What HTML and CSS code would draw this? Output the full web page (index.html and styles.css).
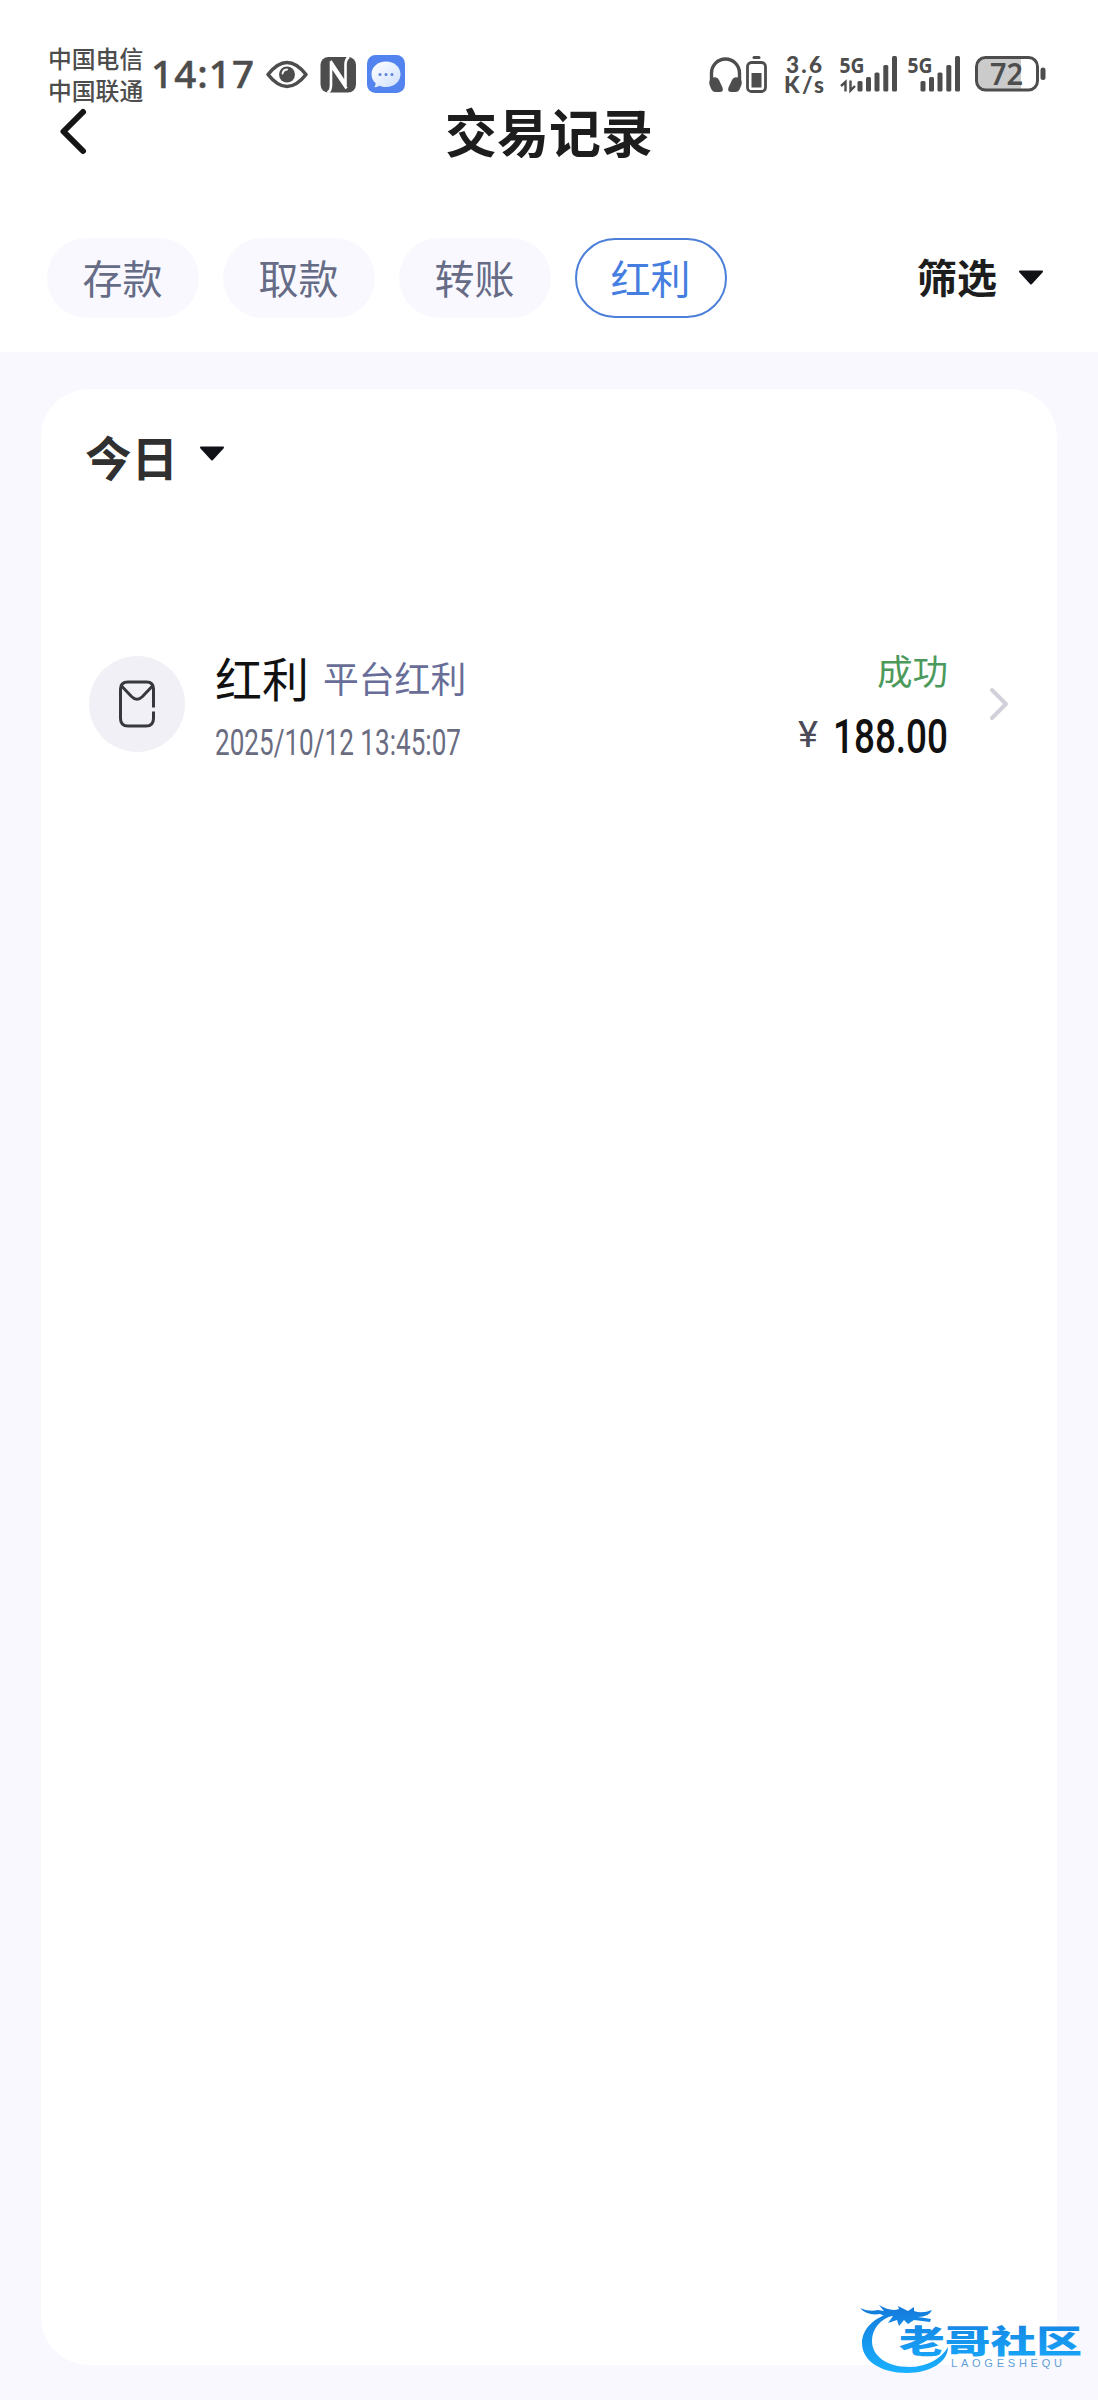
FILE: index.html
```html
<!DOCTYPE html>
<html lang="zh-CN">
<head>
<meta charset="utf-8">
<title>交易记录</title>
<link rel="stylesheet" href="styles.css">
</head>
<body>
<div class="screen">
  <header class="top">
    <div class="status">
      <div class="carriers"><span>中国电信</span><span>中国联通</span></div>
      <svg class="status-left" width="256" height="44" viewBox="150 52 256 44">
        <text class="clock" x="151" y="88" textLength="103">14:17</text>
        <path d="M268 74.500Q287 50.500 306 74.500Q287 98.500 268 74.500Z" fill="none" stroke="#4d4d4d" stroke-width="3.600" stroke-linejoin="round"/>
        <circle cx="287" cy="74.500" r="8" fill="#4d4d4d"/>
        <path d="M282.500 73.500a5 5 0 0 1 4.500-4" fill="none" stroke="#fff" stroke-width="1.800" stroke-linecap="round"/>
        <rect x="320.500" y="57" width="35.500" height="35.500" rx="8" fill="#4d4d4d"/>
        <path d="M327.500 92.500Q331 91 331 85V65.500L346.500 88.500M349 57Q345.500 59 345.500 65V83.500L330.500 61" fill="none" stroke="#fff" stroke-width="2.600"/>
        <defs><linearGradient id="bubble" x2="1" y2="1"><stop stop-color="#fff"/><stop offset="1" stop-color="#cfe0ff"/></linearGradient></defs>
        <rect x="367" y="55" width="38" height="38" rx="8.500" fill="#5283ee"/>
        <path d="M386 61.500c8.300 0 14.500 5.500 14.500 12.700S394.300 87 386 87c-2.500 0-4.700-.4-6.500-1.200-1.700 1.100-3.400 1.500-5.300 1.300 1.200-1.300 1.600-2.600 1.300-4.100-2.600-2.200-4-5.200-4-8.800 0-7.200 6.200-12.700 14.500-12.700Z" fill="url(#bubble)"/>
        <g fill="#5b83d8"><circle cx="380" cy="74.500" r="1.500"/><circle cx="386" cy="74.500" r="1.500"/><circle cx="392" cy="74.500" r="1.500"/></g>
      </svg>
      <svg class="status-right" width="342" height="44" viewBox="706 52 342 44">
        <g fill="#4d4d4d">
          <path d="M711.500 82V73a14 14 0 0 1 28 0v9" fill="none" stroke="#4d4d4d" stroke-width="3.400"/>
          <path d="M711 78.500q6-3 8 1.500l3.500 7.500q1.500 4.500-3 4.500h-4q-3 0-4.500-3.500-3.500-6.500 0-10ZM740 78.500q-6-3-8 1.500l-3.500 7.500q-1.500 4.500 3 4.500h4q3 0 4.500-3.500 3.500-6.500 0-10Z"/>
          <rect x="752.500" y="56" width="8" height="3" rx="1.500"/>
          <rect x="747.500" y="62.500" width="18" height="29" rx="4" fill="none" stroke="#4d4d4d" stroke-width="2.800"/>
          <rect x="751.500" y="73" width="10" height="14.500"/>
          <text class="speed" x="786" y="72.500" textLength="36">3.6</text>
          <text class="speed" x="784" y="93" textLength="40">K/s</text>
          <text class="net" x="839.500" y="73" textLength="25" lengthAdjust="spacingAndGlyphs">5G</text>
          <path d="M841 86l4.500-4v9.500M850.500 80.500v10l4.500-4.500" fill="none" stroke="#4d4d4d" stroke-width="2.400"/>
          <rect x="857.500" y="81" width="5" height="10.500" rx="1.500"/><rect x="866" y="77" width="5" height="14.500" rx="1.500"/><rect x="874.500" y="72.500" width="5" height="19" rx="1.500"/><rect x="883.300" y="65" width="5" height="26.500" rx="1.500"/><rect x="892" y="56" width="5" height="35.500" rx="1.500"/>
          <text class="net" x="907.500" y="73" textLength="25" lengthAdjust="spacingAndGlyphs">5G</text>
          <rect x="920.500" y="81" width="5" height="10.500" rx="1.500"/><rect x="929" y="77" width="5" height="14.500" rx="1.500"/><rect x="937.500" y="72.500" width="5" height="19" rx="1.500"/><rect x="946.300" y="65" width="5" height="26.500" rx="1.500"/><rect x="955" y="56" width="5" height="35.500" rx="1.500"/>
          <path d="M1021 58.500V89H985a8 8 0 0 1-8-8V66.500a8 8 0 0 1 8-8Z" fill="#cbcbcb"/>
          <rect x="976.500" y="57.500" width="61" height="32.500" rx="9" fill="none" stroke="#4d4d4d" stroke-width="3"/>
          <rect x="1040.500" y="67.500" width="5" height="12.500" rx="2.500"/>
          <text class="level" x="990" y="84.500" textLength="33" lengthAdjust="spacingAndGlyphs">72</text>
        </g>
      </svg>
    </div>
    <div class="titlebar">
      <svg class="back" width="32" height="52" viewBox="0 0 32 52"><path d="M26 6L6.500 25.500L26 45" fill="none" stroke="#151515" stroke-width="6" stroke-linecap="round" stroke-linejoin="round"/></svg>
      <h1>交易记录</h1>
    </div>
    <nav class="tabs">
      <span class="tab">存款</span><span class="tab">取款</span><span class="tab">转账</span><span class="tab active">红利</span>
      <span class="filter"><span class="filter-label">筛选</span><svg class="caret" width="26" height="16" viewBox="0 0 26 16"><path d="M2 1.500H24L13 13.500Z" fill="#111217" stroke="#111217" stroke-width="2" stroke-linejoin="round"/></svg></span>
    </nav>
  </header>
  <main class="card">
    <div class="day"><span>今日</span><svg class="caret" width="26" height="16" viewBox="0 0 26 16"><path d="M2 1.500H24L13 13.500Z" fill="#111217" stroke="#111217" stroke-width="2" stroke-linejoin="round"/></svg></div>
    <div class="record">
      <div class="badge"><svg width="40" height="50" viewBox="0 0 40 50"><path d="M36.500 28.500V10Q36.500 3 29.500 3H11Q3.500 3 3.500 10V39.500Q3.500 47 11 47H29Q36.500 47 36.500 39.500V32.500M5 7.500L14.500 17.500Q20 23 25.500 17.500L35 7.500" fill="none" stroke="#37373f" stroke-width="3"/></svg></div>
      <div class="info">
        <div class="name"><b>红利</b><span>平台红利</span></div>
        <svg class="date" width="250" height="44" viewBox="0 0 250 44"><text x="0" y="33" textLength="246" lengthAdjust="spacingAndGlyphs">2025/10/12 13:45:07</text></svg>
      </div>
      <div class="result">
        <span class="ok">成功</span>
        <svg class="sum" width="152" height="58" viewBox="0 0 152 58"><text class="yen" x="2" y="38.500" textLength="20" lengthAdjust="spacingAndGlyphs">¥</text><text class="amount" x="37" y="44.500" textLength="115" lengthAdjust="spacingAndGlyphs">188.00</text></svg>
      </div>
      <svg class="chevron" width="22" height="36" viewBox="0 0 22 36"><path d="M3 4L17 18L3 32" fill="none" stroke="#d2d1da" stroke-width="4" stroke-linecap="round" stroke-linejoin="round"/></svg>
    </div>
  </main>
  <svg class="watermark" width="238" height="90" viewBox="850 2295 238 90">
    <defs><linearGradient id="wave" gradientUnits="userSpaceOnUse" x1="0" y1="2308" x2="0" y2="2372"><stop stop-color="#147bdc"/><stop offset="1" stop-color="#19b0ff"/></linearGradient></defs>
    <g fill="url(#wave)">
      <path d="M894 2312C873 2317 862 2330 862 2343C862 2361 881 2373 907 2373C930 2373 948 2362 948 2347C941 2359 927 2367 909 2367C887 2367 872 2356 872 2341C872 2329 880 2319 894 2315Z"/>
      <path d="M860 2308Q868 2312 878 2310L884 2311L879 2305Q891 2312 899 2309L898 2306L908 2311L914 2307L914 2311Q922 2314 932 2310Q929 2317 918 2317L931 2319L930 2322L914 2320L908 2324L904 2320L899 2326L897 2320L888 2323L893 2316Q885 2317 880 2314Q867 2316 860 2308Z"/>
      <text class="brand" x="899" y="2353" textLength="183" lengthAdjust="spacingAndGlyphs">老哥社区</text>
    </g>
    <text class="latin" x="951" y="2367" textLength="111">LAOGESHEQU</text>
  </svg>
</div>
</body>
</html>
```
FILE: styles.css
```css
body {
  margin: 0;
  font-family: "Noto Sans CJK SC", sans-serif;
}

svg {
  overflow: visible;
}

.screen {
  position: relative;
  box-sizing: border-box;
  width: 1098px;
  height: 2400px;
  background: #f8f8fe;
}

.top {
  box-sizing: border-box;
  height: 352px;
  padding-top: 43px;
  background: #fff;
}

.status {
  display: flex;
  height: 62px;
  padding-left: 48px;
}

.carriers {
  display: flex;
  flex-direction: column;
  width: 102px;
  margin-top: -1px;
  font-size: 23.8px;
  font-weight: 500;
  line-height: 32px;
  color: #4d4d4d;
}

.status-left {
  margin-top: 9px;
}

.status-right {
  margin: 9px 50px 0 auto;
}

.clock {
  font: 500 38.5px "Noto Sans", sans-serif;
  fill: #4d4d4d;
  stroke: #4d4d4d;
  stroke-width: 0.5px;
}

.speed {
  font: 900 22.5px Lato, sans-serif;
}

.net {
  font: 700 22px "Noto Sans", sans-serif;
}

.level {
  font: 600 31px "Noto Sans", sans-serif;
}

.titlebar {
  display: grid;
  grid-template-columns: 92px 1fr 92px;
  align-items: center;
  height: 54px;
}

.back {
  margin-left: 57px;
}

h1 {
  margin: -3px 0 0;
  font-size: 52px;
  font-weight: 700;
  line-height: 54px;
  text-align: center;
  color: #1d1d1d;
}

.tabs {
  display: flex;
  gap: 24px;
  margin-top: 79px;
  padding: 0 54px 0 47px;
}

.tab {
  box-sizing: border-box;
  width: 152px;
  height: 80px;
  padding-right: 1px;
  border-radius: 40px;
  background: #f8f8fe;
  font-size: 40px;
  line-height: 78px;
  text-align: center;
  color: #666b86;
}

.tab.active {
  border: 2.5px solid #4b7fd9;
  background: #fff;
  line-height: 74px;
  color: #457ee0;
}

.filter {
  display: flex;
  align-items: center;
  gap: 21px;
  margin-left: auto;
  height: 79px;
  font-size: 40px;
  font-weight: 700;
  color: #1d1d1d;
}

.filter-label {
  margin-bottom: 4px;
}

.card {
  box-sizing: border-box;
  width: 1016px;
  height: 1976px;
  margin: 37px auto 0;
  padding: 39px 46px 0 44px;
  border-radius: 48px;
  background: #fff;
}

.day {
  display: flex;
  align-items: center;
  gap: 21px;
  height: 54px;
  font-size: 46.5px;
  font-weight: 700;
  color: #303030;
}

.day .caret {
  margin-bottom: 3px;
}

.record {
  display: flex;
  align-items: center;
  height: 110px;
  margin-top: 167px;
  padding-left: 4px;
}

.badge {
  display: flex;
  align-items: center;
  justify-content: center;
  width: 96px;
  height: 96px;
  border-radius: 50%;
  background: #f0f0f6;
}

.info {
  display: flex;
  flex-direction: column;
  margin-left: 30px;
}

.name {
  display: flex;
  align-items: center;
  gap: 14px;
  box-sizing: border-box;
  height: 80px;
  padding-bottom: 10px;
}

.name b {
  font-size: 47px;
  font-weight: 400;
  line-height: 62px;
  color: #111;
}

.name span {
  font-size: 35.8px;
  line-height: 62px;
  color: #686e98;
}

.date {
  font: 400 36px Roboto, sans-serif;
  fill: #6a6c82;
}

.result {
  display: flex;
  flex-direction: column;
  align-items: flex-end;
  margin-left: auto;
}

.ok {
  height: 66px;
  font-size: 35.5px;
  line-height: 56px;
  color: #4c9a5b;
}

.yen {
  font: 400 36px Roboto, sans-serif;
  fill: #4a4b57;
}

.amount {
  font: 500 49px Roboto, sans-serif;
  fill: #111;
}

.chevron {
  margin-left: 41px;
}

.watermark {
  position: absolute;
  left: 850px;
  top: 2295px;
}

.brand {
  font: 900 32px "Noto Sans CJK SC", sans-serif;
}

.latin {
  font: 400 11px "Liberation Sans", sans-serif;
  fill: #5f9fd8;
}
```
